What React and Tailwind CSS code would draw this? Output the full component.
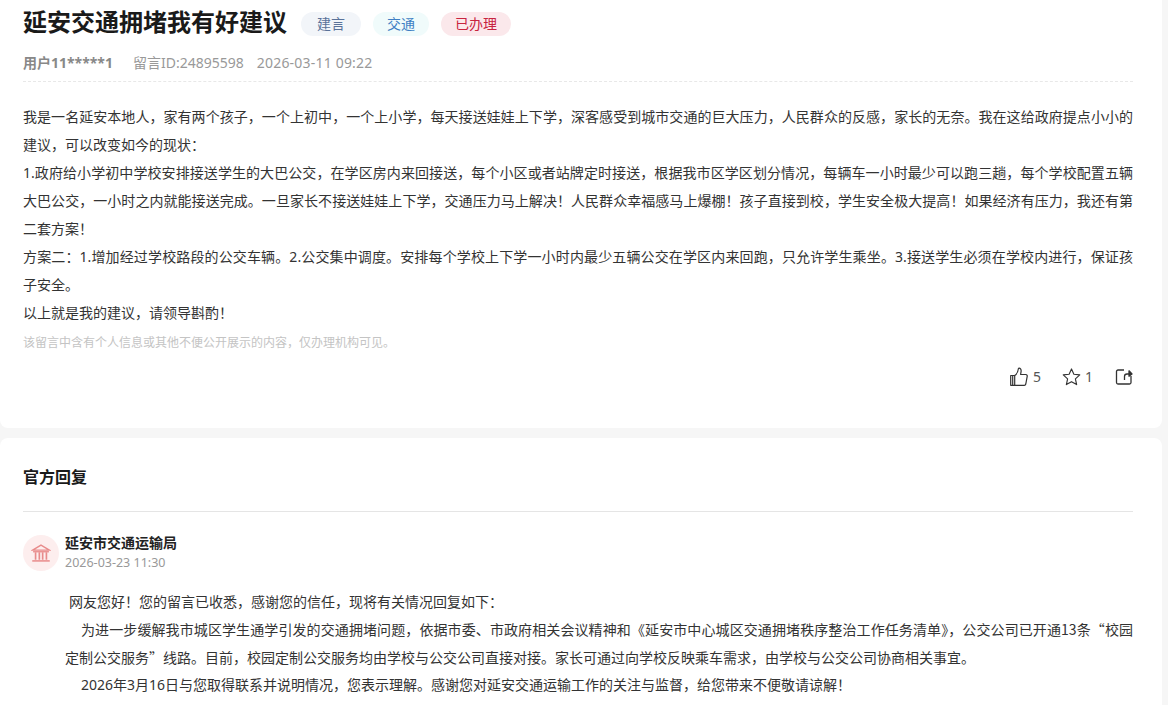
const font = { fontFamily: '"Noto Sans", "Noto Sans CJK SC", sans-serif' };

const Tag = ({ className, children }) => (
  <span className={`h-6 rounded-full text-center text-sm leading-6 ${className}`}>{children}</span>
);

const ThumbIcon = () => (
  <svg width="18" height="20" viewBox="0 0 18 20" fill="none" stroke="#333" strokeWidth="1.2" strokeLinejoin="round">
    <path d="M.7 8.500h4v9.800h-4z" />
    <path d="M2.700 8.500v9.800" />
    <path d="M4.700 8.500c2.200-1.400 3.400-3.800 3.800-7.200 1.800-.4 2.800 1 2.600 3l-.5 3.200h5.200c1 0 1.600.8 1.400 1.800l-1.400 7.700c-.2.800-.7 1.300-1.500 1.300H4.700" />
  </svg>
);

const StarIcon = () => (
  <svg width="19" height="20" viewBox="0 0 20 20" fill="none" stroke="#333" strokeWidth="1.2" strokeLinejoin="round">
    <path d="M10 1.500l2.500 5.600 6.200.7-4.600 4.100 1.300 6.100-5.400-3.100-5.400 3.100 1.300-6.100-4.600-4.100 6.200-.7z" />
  </svg>
);

const ShareIcon = () => (
  <svg width="18" height="18" viewBox="0 0 18 18" fill="none" stroke="#333" strokeWidth="1.3" strokeLinejoin="round">
    <path d="M9 2H3a1.500 1.500 0 0 0-1.500 1.500v11A1.500 1.500 0 0 0 3 16h11.500a1.500 1.500 0 0 0 1.500-1.500V8" />
    <path d="M9.500 12V8.500c0-1.500 1-2.500 2.500-2.500h4" />
    <path d="M14 2.800L17 6l-3 2.200z" fill="#333" />
  </svg>
);

const BankIcon = () => (
  <svg width="20" height="20" viewBox="0 0 24 24" fill="none" stroke="#e88b8b" strokeWidth="1.600">
    <path d="M12 2.500L22 8.500H2z" />
    <path d="M2.500 10.500h19" />
    <path d="M5.500 11v9M10 11v9M14 11v9M18.500 11v9" strokeWidth="2" />
    <path d="M1.500 21.500h21" strokeWidth="1.800" />
  </svg>
);

export default function App() {
  return (
    <div className="h-[705px] overflow-hidden bg-[#f6f6f6] pr-1.5" style={font}>
      <div className="h-[428px] rounded-b-lg bg-white pr-[29px] pl-[23px]">
        <div className="flex h-[47px] items-center">
          <h1 className="-mt-1 text-2xl leading-[47px] font-bold text-[#1a1a1a]">延安交通拥堵我有好建议</h1>
          <div className="ml-3.5 flex gap-3">
            <Tag className="w-[60px] bg-[#f2f5f9] text-[#5a7299]">建言</Tag>
            <Tag className="w-14 bg-[#f0fbfb] text-[#3f7fc4]">交通</Tag>
            <Tag className="w-[70px] bg-[#fbe8eb] text-[#c8243f]">已办理</Tag>
          </div>
        </div>
        <div className="flex h-[35px] items-center border-b border-dashed border-[#e8e8e8] pb-0.5 text-sm text-[#999]">
          <span className="font-bold text-[#888]">用户11*****1</span>
          <span className="ml-5">留言ID:24895598</span>
          <span className="ml-[13px] tracking-[0.2px]">2026-03-11 09:22</span>
        </div>
        <div className="mt-[21px] text-justify text-sm leading-7 text-[#333]">
          <p>我是一名延安本地人，家有两个孩子，一个上初中，一个上小学，每天接送娃娃上下学，深客感受到城市交通的巨大压力，人民群众的反感，家长的无奈。我在这给政府提点小小的建议，可以改变如今的现状：</p>
          <p>1.政府给小学初中学校安排接送学生的大巴公交，在学区房内来回接送，每个小区或者站牌定时接送，根据我市区学区划分情况，每辆车一小时最少可以跑三趟，每个学校配置五辆大巴公交，一小时之内就能接送完成。一旦家长不接送娃娃上下学，交通压力马上解决！人民群众幸福感马上爆棚！孩子直接到校，学生安全极大提高！如果经济有压力，我还有第二套方案！</p>
          <p>方案二：1.增加经过学校路段的公交车辆。2.公交集中调度。安排每个学校上下学一小时内最少五辆公交在学区内来回跑，只允许学生乘坐。3.接送学生必须在学校内进行，保证孩子安全。</p>
          <p>以上就是我的建议，请领导斟酌！</p>
        </div>
        <p className="mt-1.5 text-xs leading-5 text-[#c4c4c4]">该留言中含有个人信息或其他不便公开展示的内容，仅办理机构可见。</p>
        <div className="mt-3.5 flex items-center justify-end text-sm text-[#555]">
          <span className="flex items-center gap-[5px]"><ThumbIcon />5</span>
          <span className="ml-[21px] flex items-center gap-1"><StarIcon />1</span>
          <span className="ml-[22px]"><ShareIcon /></span>
        </div>
      </div>
      <div className="mt-2.5 h-[300px] rounded-t-lg bg-white pr-[29px] pl-[23px]">
        <div className="flex h-[74px] items-center border-b border-[#e5e5e5] pt-1">
          <h2 className="text-base font-bold text-[#1a1a1a]">官方回复</h2>
        </div>
        <div className="mt-[21px] flex items-center gap-1.5">
          <div className="flex h-9 w-9 items-center justify-center rounded-full bg-[#fdeeee]">
            <BankIcon />
          </div>
          <div>
            <div className="text-sm leading-5 font-bold text-[#222]">延安市交通运输局</div>
            <div className="text-[12.5px] leading-5 text-[#999]">2026-03-23 11:30</div>
          </div>
        </div>
        <div className="mt-[15px] pl-[42px] text-justify text-sm leading-7 text-[#333]">
          <p className="pl-1">网友您好！您的留言已收悉，感谢您的信任，现将有关情况回复如下：</p>
          <p className="-mt-px indent-4 font-['Noto_Sans_CJK_SC']">为进一步缓解我市城区学生通学引发的交通拥堵问题，依据市委、市政府相关会议精神和《延安市中心城区交通拥堵秩序整治工作任务清单》，公交公司已开通13条“校园定制公交服务”线路。目前，校园定制公交服务均由学校与公交公司直接对接。家长可通过向学校反映乘车需求，由学校与公交公司协商相关事宜。</p>
          <p className="indent-4">2026年3月16日与您取得联系并说明情况，您表示理解。感谢您对延安交通运输工作的关注与监督，给您带来不便敬请谅解！</p>
        </div>
      </div>
    </div>
  );
}
